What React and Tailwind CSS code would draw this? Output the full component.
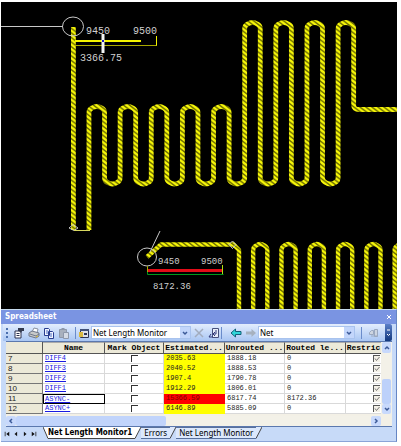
import { useState } from 'react';

const nets = [
  { row: 7, name: 'DIFF4', estimated: '2035.63', unrouted: '1888.18', routed: '0' },
  { row: 8, name: 'DIFF3', estimated: '2040.52', unrouted: '1888.53', routed: '0' },
  { row: 9, name: 'DIFF2', estimated: '1907.4', unrouted: '1790.78', routed: '0' },
  { row: 10, name: 'DIFF1', estimated: '1912.29', unrouted: '1806.01', routed: '0' },
  { row: 11, name: 'ASYNC-', estimated: '15366.59', unrouted: '6817.74', routed: '8172.36', over: true },
  { row: 12, name: 'ASYNC+', estimated: '6146.89', unrouted: '5885.09', routed: '0' },
];

const columns = ['Name', 'Mark Object', 'Estimated...', 'Unrouted ...', 'Routed le...', 'Restric'];

// one "up, over, down" loop of a serpentine trace
function hump(x, pitch, top) {
  return `V${top + 6} Q${x} ${top + 3} ${x + 3} ${top + 1.5} Q${x + pitch / 2} ${top - 1.5} ${x + pitch - 3} ${top + 1.5} Q${x + pitch} ${top + 3} ${x + pitch} ${top + 6}`;
}

function valley(x, pitch, bottom) {
  return `V${bottom - 6} Q${x} ${bottom - 3} ${x + 3} ${bottom - 1.5} Q${x + pitch / 2} ${bottom + 1.5} ${x + pitch - 3} ${bottom - 1.5} Q${x + pitch} ${bottom - 3} ${x + pitch} ${bottom - 6}`;
}

function upperTrace() {
  const pitch = 15.57;
  const left = 72.4;
  let d = `M${left} 25 V228 M${left + pitch} 228 `;
  for (let k = 1; k < 18; k += 2) {
    const x = left + pitch * k;
    d += hump(x, pitch, k < 11 ? 104.5 : 20.5);
    if (k < 17) d += valley(x + pitch, pitch, 182);
  }
  return d + 'V103 Q352.6 107.5 358 107.5 H396';
}

function lowerTrace() {
  const pitch = 14.15;
  let d = 'M146 255 L160 242.5 H232.5 L238 248 V307';
  for (let k = 1; k < 12; k += 2) {
    const x = 238 + pitch * k;
    d += `M${x} 307 ` + hump(x, pitch, 242) + 'V307';
  }
  return d;
}

function Board() {
  return (
    <svg viewBox="0 0 396 307" className="block w-full bg-black" role="img" aria-label="Routed nets">
      <defs>
        <pattern id="hatch" width="6" height="4.6" patternUnits="userSpaceOnUse">
          <rect width="6" height="4.6" fill="#f8f808" />
          <path d="M-3 -2.3 L9 6.9 M-6 0 L3 6.9 M3 -2.3 L9 2.3" stroke="#6a6a00" strokeWidth="1.4" />
        </pattern>
      </defs>
      <g fill="none" stroke="url(#hatch)" strokeLinejoin="round">
        <path d={upperTrace()} strokeWidth="4.8" />
        <path d={lowerTrace()} strokeWidth="4.4" />
      </g>

      <g fill="none" stroke="#c8c8c8">
        <path d="M0 24.5 H62" />
        <ellipse cx="72" cy="24.5" rx="10.5" ry="9.5" />
        <ellipse cx="146" cy="255" rx="9.5" ry="9" />
        <path d="M149 250 L159 229" />
        <path d="M231.5 239 L235 242.5 L231.5 246.5 L228 242.5 Z" />
        <path d="M68 226 L72 222.5 L77 226 L73 228.5 Z" />
        <path d="M73 228.5 H89" stroke="#d8d860" />
      </g>

      <path d="M74 39 H140" stroke="#f4f400" strokeWidth="2" />
      <path d="M74 43.5 H156" stroke="#a8a800" fill="none" />
      <path d="M155.5 34 V43.5" stroke="#f4f400" />
      <rect x="100.5" y="32" width="3" height="19" fill="#f4f4f4" />
      <rect x="101" y="38" width="2" height="2" fill="#1818c8" />

      <path d="M146.5 264 V272.5 H222.5" stroke="#009a1c" fill="none" />
      <path d="M146.5 264 V270" stroke="#a8a800" />
      <path d="M147 268.5 H222" stroke="#e40c18" strokeWidth="3" />
      <path d="M221.5 263 V272" stroke="#b4e010" />

      <g fill="#d0d0d0" className="font-['Liberation_Mono',monospace] text-[10px]">
        <text x="85" y="32">9450</text>
        <text x="132" y="32">9500</text>
        <text x="79" y="59">3366.75</text>
      </g>
      <g fill="#d0d0d0" className="font-['Liberation_Mono',monospace] text-[9px]">
        <text x="157" y="262">9450</text>
        <text x="200" y="262">9500</text>
        <text x="152" y="287">8172.36</text>
      </g>
    </svg>
  );
}

function ToolButton({ label, children }) {
  return (
    <button type="button" aria-label={label} className="flex size-[15px] shrink-0 items-center justify-center">
      <svg viewBox="0 0 12 12" className="size-3" fill="none">
        {children}
      </svg>
    </button>
  );
}

function Separator() {
  return <span className="h-3 w-px shrink-0 bg-[#6a8ccb]" />;
}

function Picker({ label, options, className }) {
  return (
    <div className={'relative h-[13px] ' + className}>
      <select
        aria-label={label}
        className="block h-full w-full appearance-none border border-[#a9c3ee] bg-white pl-px text-[8px] leading-[11px] text-black"
      >
        {options.map((option) => (
          <option key={option}>{option}</option>
        ))}
      </select>
      <span className="pointer-events-none absolute inset-y-px right-px flex w-2.5 items-center justify-center bg-[#c3d6fb]">
        <Chevron d="M1 2 L3 4 L5 2" />
      </span>
    </div>
  );
}

function Chevron({ d }) {
  return (
    <svg viewBox="0 0 6 6" className="size-1.5" fill="none" stroke="#3c5a98" strokeWidth="1.5">
      <path d={d} />
    </svg>
  );
}

function ScrollButton({ label, d, className }) {
  return (
    <button
      type="button"
      aria-label={label}
      className={'flex shrink-0 items-center justify-center rounded-xs bg-[#c8d9fc] ' + className}
    >
      <Chevron d={d} />
    </button>
  );
}

function Toolbar() {
  return (
    <div className="flex h-[17px] items-center bg-linear-to-b from-[#e3edfd] to-[#a9c6f3] pl-[3px]">
      <span className="h-2.5 shrink-0 border-l-2 border-dotted border-[#4a6fae]" />
      <span className="w-[3px]" />
      <ToolButton label="Properties">
        <path d="M2 4h6v7H2z" fill="#fff" stroke="#2c3350" />
        <path d="M3.5 6.5h3M3.5 8.5h3" stroke="#2c3350" />
        <path d="M5 1h6v3H9l-1 2-2-2H5z" fill="#343b50" />
      </ToolButton>
      <ToolButton label="Print">
        <path d="M4 5l2-4 4 1-1 4" fill="#fff" stroke="#8890a0" />
        <path d="M1 6l3-2 7 2v3l-3 2-7-2z" fill="#c7c9c9" stroke="#70788a" />
        <path d="M2 7l6 2 3-2" stroke="#70788a" />
        <path d="M8 10l2-1" stroke="#d8b828" />
      </ToolButton>
      <ToolButton label="Copy">
        <path d="M1.5 1.5h4l1 1v6h-5zM5.5 4.5h4l1 1v6h-5z" fill="#f0f4ff" stroke="#273c90" />
        <path d="M3 4h2M3 6h2M7 7h2M7 9h2" stroke="#4c6cc0" />
      </ToolButton>
      <ToolButton label="Paste">
        <path d="M1.5 2.5h7v8h-7z" fill="#a8b0bd" stroke="#8e98aa" />
        <path d="M3.5 1h3v2h-3z" fill="#8e98aa" />
        <path d="M5.5 5.5h5v6h-5z" fill="#d4dae4" stroke="#8e98aa" />
      </ToolButton>
      <span className="w-1" />
      <Separator />
      <ToolButton label="Worksheet">
        <path d="M2.5 2.5h8v8h-8z" fill="#dce0e8" stroke="#2c3350" />
        <path d="M2 2h9v2H2z" fill="#405078" />
        <path d="M1 5h4v5H1z" fill="#d8b840" />
        <path d="M6 6h3v2H6z" fill="#2c3350" />
      </ToolButton>
      <Picker label="Worksheet view" options={['Net Length Monitor']} className="w-[100px] shrink-0" />
      <ToolButton label="Delete">
        <path d="M2 2l8 8M10 2l-8 8" stroke="#a2acbe" strokeWidth="1.5" />
      </ToolButton>
      <ToolButton label="Edit formula">
        <path d="M4.5 1.5h6v9h-6z" fill="#e8eefa" stroke="#46507c" />
        <path d="M1 10h4M3 7l-2 3M8 3v4H5M7 5L5 7l2 2" stroke="#303878" />
      </ToolButton>
      <Separator />
      <span className="w-1.5" />
      <ToolButton label="Back">
        <path d="M1 6l4.5-4v2.5H11v3H5.5V10z" fill="#2fd5d8" stroke="#126078" />
      </ToolButton>
      <ToolButton label="Forward">
        <path d="M11 6L6.5 2v2.5H1v3h5.5V10z" fill="#a6b1bf" />
      </ToolButton>
      <Picker label="Object type" options={['Net']} className="min-w-0 flex-1" />
      <span className="w-1.5" />
      <Separator />
      <span className="w-1" />
      <ToolButton label="Find">
        <path d="M1.5 5.5l2-2h2v4h-4zM6.5 2.5h3v7h-3z" fill="#cdd5e1" stroke="#9ba9c0" />
        <path d="M3 9h7" stroke="#9ba9c0" />
      </ToolButton>
      <button
        type="button"
        aria-label="Toolbar options"
        className="ml-1 flex h-full w-[7px] shrink-0 items-center justify-center rounded-r-xs bg-linear-to-b from-[#5c80c8] to-[#12387e]"
      >
        <svg viewBox="0 0 5 8" className="h-2 w-[5px]" fill="none" stroke="#fff">
          <path d="M1 1h3M1 5l1.5 1.5L4 5" />
        </svg>
      </button>
    </div>
  );
}

function NetTable() {
  return (
    <table className="w-full table-fixed border-separate border-spacing-0 bg-white font-['Liberation_Mono',monospace] text-[7px] leading-[9px] text-[#222]">
      <colgroup>
        <col className="w-[37px]" />
        <col className="w-[62px]" />
        <col className="w-[59px]" />
        <col className="w-[61px]" />
        <col className="w-[60px]" />
        <col className="w-[61px]" />
        <col />
      </colgroup>
      <thead>
        <tr className="bg-[#ece9d8] text-[8px] leading-[10px] text-black">
          <th aria-label="Row" className="border-r border-b border-[#555]" />
          {columns.map((column) => (
            <th
              key={column}
              className="border-t border-r border-b border-[#555] border-t-[#aaa] p-0 text-center font-bold whitespace-nowrap last:border-r-0"
            >
              {column}
            </th>
          ))}
        </tr>
      </thead>
      <tbody>
        {nets.map((net) => (
          <tr key={net.row}>
            <th
              scope="row"
              className="border-r border-b border-[#777] bg-[#ece9d8] p-0 pl-0.5 text-left font-['Liberation_Sans',sans-serif] text-[8px] font-normal"
            >
              {net.row}
            </th>
            <td
              className={
                net.over
                  ? 'p-0 pl-0.5 outline -outline-offset-1 outline-black'
                  : 'border-r border-b border-[#d9d9d9] p-0 pl-0.5'
              }
            >
              <a href={'#' + net.name} className="text-[#1a1ae0] underline">
                {net.name}
              </a>
            </td>
            <td className="border-r border-b border-[#d9d9d9] p-0">
              <input
                type="checkbox"
                aria-label={'Mark ' + net.name}
                className="mx-auto block size-[7px] appearance-none border-t border-l border-[#333] bg-white"
              />
            </td>
            <td
              className={
                net.over
                  ? 'border-r border-b border-[#f00] bg-[#f00] p-0 pl-0.5 text-[#7a0000]'
                  : 'border-r border-b border-[#ff0] bg-[#ff0] p-0 pl-0.5'
              }
            >
              {net.estimated}
            </td>
            <td className="border-r border-b border-[#d9d9d9] p-0 pl-0.5">{net.unrouted}</td>
            <td className="border-r border-b border-[#d9d9d9] p-0 pl-0.5">{net.routed}</td>
            <td className="border-b border-[#d9d9d9] p-0">
              <label className="relative mr-px ml-auto block size-[7px]">
                <input
                  type="checkbox"
                  defaultChecked
                  aria-label={'Restrict ' + net.name}
                  className="block size-[7px] appearance-none border-t border-l border-[#555] bg-[#f4f1e8]"
                />
                <svg viewBox="0 0 7 7" className="pointer-events-none absolute inset-0" fill="none" stroke="#777">
                  <path d="M2 3.5L3.5 5.5L6.5 2" />
                </svg>
              </label>
            </td>
          </tr>
        ))}
      </tbody>
    </table>
  );
}

function SheetTabs() {
  const tabs = ['Net Length Monitor1', 'Errors', 'Net Length Monitor'];
  const [active, setActive] = useState(tabs[0]);
  const arrows = [
    ['First sheet', 'M1 1v6h1V1zM7 1v6L3 4z'],
    ['Previous sheet', 'M5.5 1v6L2 4z'],
    ['Next sheet', 'M2.5 1v6L6 4z'],
    ['Last sheet', 'M6 1v6h1V1zM1 1v6l4-3z'],
  ];

  return (
    <div className="flex h-3.5 bg-[#c7daf8]">
      <div className="flex items-center gap-[3px] pr-1.5 pl-[3px]">
        {arrows.map(([label, d]) => (
          <button key={label} type="button" aria-label={label}>
            <svg viewBox="0 0 8 8" className="block size-1.5" fill="#111">
              <path d={d} />
            </svg>
          </button>
        ))}
      </div>
      {tabs.map((tab) => (
        <button
          key={tab}
          type="button"
          onClick={() => setActive(tab)}
          className="flex h-3 whitespace-nowrap"
        >
          {tab === active && (
            <svg viewBox="0 0 5 12" className="h-3 w-[5px]">
              <path d="M0 0h5v12z" fill="#fff" />
              <path d="M0 0L5 11.5" stroke="#444" />
            </svg>
          )}
          <span
            className={
              tab === active
                ? "border-b border-[#444] bg-white pr-[3px] font-['DejaVu_Sans_Condensed','DejaVu_Sans',sans-serif] text-[8px] leading-[11px] font-bold"
                : 'border-y border-[#58709c] bg-[#dce8fc] px-[3px] text-[8px] leading-[10px]'
            }
          >
            {tab}
          </span>
          <svg viewBox="0 0 6 12" className="h-3 w-1.5">
            <path d="M0 0h6L0 12z" fill={tab === active ? '#fff' : '#dce8fc'} />
            <path d="M0 11.5L6 0" stroke="#444" />
          </svg>
        </button>
      ))}
    </div>
  );
}

export default function App() {
  return (
    <div className="bg-white pt-0.5 pr-1 pb-1 pl-px font-['Noto_Sans',sans-serif] text-black">
      <Board />
      <section className="border-t border-r border-b border-[#c7dcee] border-r-[#6686c4] border-b-[#8aa4d8] bg-[#c7daf8]">
        <header className="flex h-3.5 items-center justify-between bg-[#7a94e2] px-1 text-white">
          <h1 className="font-['DejaVu_Sans_Condensed','DejaVu_Sans',sans-serif] text-[8px] font-bold">Spreadsheet</h1>
          <button type="button" aria-label="Close">
            <svg viewBox="0 0 6 6" className="block size-1.5" stroke="#fff">
              <path d="M1 1l4 4M5 1L1 5" />
            </svg>
          </button>
        </header>
        <div className="pr-1 pl-0.5">
          <Toolbar />
        </div>
        <div className="mr-1 ml-[5px] border-t border-b border-[#5b78ae] bg-[#f3f0e6]">
          <div className="flex">
            <div className="min-w-0 flex-1">
              <NetTable />
            </div>
            <div className="flex w-[11px] flex-col bg-[#f3f1e8] px-px">
              <ScrollButton label="Scroll up" d="M1 4L3 2L5 4" className="h-[11px]" />
              <div className="flex-1" />
              <div className="h-[25px] rounded-xs bg-[#bdd1fa]" />
              <ScrollButton label="Scroll down" d="M1 2L3 4L5 2" className="h-2.5" />
            </div>
          </div>
          <div className="mt-0.5 mr-[11px] flex h-2.5 bg-[#f3f1e8]">
            <ScrollButton label="Scroll left" d="M4 1L2 3L4 5" className="w-2.5" />
            <div className="w-2/5 rounded-xs bg-[#c1d4fb]" />
            <div className="flex-1" />
            <ScrollButton label="Scroll right" d="M2 1L4 3L2 5" className="w-2.5" />
          </div>
        </div>
        <SheetTabs />
      </section>
    </div>
  );
}
